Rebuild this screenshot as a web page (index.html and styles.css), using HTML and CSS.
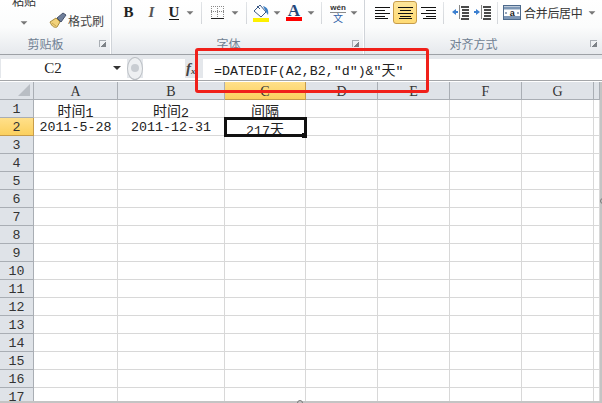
FILE: index.html
```html
<!DOCTYPE html>
<html lang="zh-CN">
<head>
    <meta charset="UTF-8">
    <title>DATEDIF</title>
    <link rel="stylesheet" href="styles.css">
</head>
<body>

    <div class="ribbon">
        <div class="group group-clip">
            <div class="tools">
                <div class="paste">
                    <span class="paste-text">粘贴</span>
                    <span class="arrow"></span>
                </div>
                <div class="brush">
                    <svg width="19" height="17" viewBox="0 0 19 17"><path d="M1 10l6-4 4 4-3 5c-2 1-5 0-7-5z" fill="#f2d27a" stroke="#a98c3e"/><path d="M3 11l4 3" stroke="#c7a54f"/><path d="M8 6l6-5 3 2-5 7z" fill="#6f7f9b" stroke="#46536c"/></svg>
                    <span>格式刷</span>
                </div>
            </div>
            <div class="label label-clip">剪贴板</div>
            <span class="launcher"></span>
        </div>

        <div class="group group-font">
            <div class="tools">
                <div class="tool w23"><b class="fmt fmt-b">B</b></div>
                <div class="tool w23"><i class="fmt fmt-i">I</i></div>
                <div class="tool w22"><span class="fmt fmt-u">U</span></div>
                <span class="drop w10"><span class="arrow"></span></span>
                <span class="sep w12"></span>
                <div class="tool w21">
                    <svg width="13" height="13" viewBox="0 0 13 13"><path d="M.5 0v11M6.500 0v11M12.500 0v11M0 .5h13M0 5.500h13" stroke="#8a8a8a" stroke-dasharray="1 1"/><path d="M0 12.500h13" stroke="#222"/></svg>
                </div>
                <span class="drop w14"><span class="arrow"></span></span>
                <span class="sep w8"></span>
                <div class="tool w22">
                    <svg width="17" height="18" viewBox="0 0 17 18"><path d="M1 7l6-6 6 7-5 5z" fill="#fff" stroke="#3c5a86"/><path d="M4 2l3 3" stroke="#3c5a86"/><path d="M10 2c4 1 6 4 5 9l-2-3z" fill="#3c7fc4"/><path d="M0 14h16v4H0z" fill="#fdf000"/></svg>
                </div>
                <span class="drop w10"><span class="arrow"></span></span>
                <div class="tool w24 font-color">
                    <span class="a-letter">A</span>
                    <span class="a-bar"></span>
                </div>
                <span class="drop w10"><span class="arrow"></span></span>
                <span class="sep w10"></span>
                <div class="tool w24 wen">
                    <span class="wen-top">wén</span>
                    <span class="wen-char">文</span>
                </div>
                <span class="drop w8"><span class="arrow"></span></span>
            </div>
            <div class="label label-font">字体</div>
            <span class="launcher"></span>
        </div>

        <div class="group group-align">
            <div class="tools">
                <div class="tool w22">
                    <svg width="15" height="12" viewBox="0 0 15 12"><path d="M0 .5h15M0 3.500h10M0 6.500h15M0 9.500h10M0 11.500h13" stroke="#111"/></svg>
                </div>
                <div class="tool w24 active">
                    <svg width="15" height="12" viewBox="0 0 15 12"><path d="M0 .5h15M2 3.500h11M0 6.500h15M2 9.500h11M1 11.500h13" stroke="#111"/></svg>
                </div>
                <div class="tool w22">
                    <svg width="15" height="12" viewBox="0 0 15 12"><path d="M0 .5h15M5 3.500h10M0 6.500h15M5 9.500h10M2 11.500h13" stroke="#111"/></svg>
                </div>
                <span class="sep w8"></span>
                <div class="tool w27">
                    <svg width="17" height="15" viewBox="0 0 17 15"><path d="M9 2h8M10 5h7M10 8h7M10 11h7M9 14h8" stroke="#111" stroke-width="1.300"/><path d="M7.500 .5v14" stroke="#111" stroke-dasharray="1 1"/><path d="M0 7l4-3v2h2v2H4v2z" fill="#3b7fd0"/></svg>
                </div>
                <div class="tool w17">
                    <svg width="17" height="15" viewBox="0 0 17 15"><path d="M9 2h8M10 5h7M10 8h7M10 11h7M9 14h8" stroke="#111" stroke-width="1.300"/><path d="M7.500 .5v14" stroke="#111" stroke-dasharray="1 1"/><path d="M6 7L2 4v2H0v2h2v2z" fill="#3b7fd0"/></svg>
                </div>
                <span class="sep w12"></span>
                <div class="merge">
                    <svg width="18" height="15" viewBox="0 0 18 15"><rect x=".5" y=".5" width="17" height="14" fill="#fff" stroke="#4d6a8c"/><path d="M1 3h16" stroke="#7d97b5" stroke-width="3"/><path d="M1 12.500h16" stroke="#7d97b5" stroke-width="3"/><path d="M2 8h2M14 8h2" stroke="#2c4c74"/><text x="9" y="11" font-size="9" font-weight="bold" font-family="Liberation Sans" text-anchor="middle" fill="#222">a</text></svg>
                    <span>合并后居中</span>
                    <span class="arrow"></span>
                </div>
            </div>
            <div class="label label-align">对齐方式</div>
            <span class="launcher"></span>
        </div>
    </div>

    <div class="formula-bar">
        <div class="name-box">
            <span class="name-text">C2</span>
            <span class="arrow dark"></span>
        </div>
        <div class="handle"><span class="handle-dot"></span></div>
        <div class="bar-gap"></div>
        <div class="fx">f<sub>x</sub></div>
        <div class="formula">=DATEDIF(A2,B2,″d″)&amp;″<span class="cjk">天</span>″</div>
    </div>

    <div class="sheet">
        <div class="grid">
            <div class="row head">
                <div class="corner"><span class="corner-mark"></span></div>
                <div class="col">A</div><div class="col">B</div><div class="col col-on">C</div><div class="col">D</div><div class="col">E</div><div class="col">F</div><div class="col">G</div><div class="col"></div>
            </div>
            <div class="row">
                <div class="num">1</div>
                <div class="cell"><span class="cjk">时间</span>1</div><div class="cell"><span class="cjk">时间</span>2</div><div class="cell"><span class="cjk">间隔</span></div><div class="cell"></div><div class="cell"></div><div class="cell"></div><div class="cell"></div><div class="cell"></div>
            </div>
            <div class="row">
                <div class="num num-on">2</div>
                <div class="cell">2011-5-28</div><div class="cell">2011-12-31</div><div class="cell cell-on">217<span class="cjk">天</span><span class="fill-handle"></span></div><div class="cell"></div><div class="cell"></div><div class="cell"></div><div class="cell"></div><div class="cell"></div>
            </div>
            <div class="row"><div class="num">3</div><div class="cell"></div><div class="cell"></div><div class="cell"></div><div class="cell"></div><div class="cell"></div><div class="cell"></div><div class="cell"></div><div class="cell"></div></div>
            <div class="row"><div class="num">4</div><div class="cell"></div><div class="cell"></div><div class="cell"></div><div class="cell"></div><div class="cell"></div><div class="cell"></div><div class="cell"></div><div class="cell"></div></div>
            <div class="row"><div class="num">5</div><div class="cell"></div><div class="cell"></div><div class="cell"></div><div class="cell"></div><div class="cell"></div><div class="cell"></div><div class="cell"></div><div class="cell"></div></div>
            <div class="row"><div class="num">6</div><div class="cell"></div><div class="cell"></div><div class="cell"></div><div class="cell"></div><div class="cell"></div><div class="cell"></div><div class="cell"></div><div class="cell"></div></div>
            <div class="row"><div class="num">7</div><div class="cell"></div><div class="cell"></div><div class="cell"></div><div class="cell"></div><div class="cell"></div><div class="cell"></div><div class="cell"></div><div class="cell"></div></div>
            <div class="row"><div class="num">8</div><div class="cell"></div><div class="cell"></div><div class="cell"></div><div class="cell"></div><div class="cell"></div><div class="cell"></div><div class="cell"></div><div class="cell"></div></div>
            <div class="row"><div class="num">9</div><div class="cell"></div><div class="cell"></div><div class="cell"></div><div class="cell"></div><div class="cell"></div><div class="cell"></div><div class="cell"></div><div class="cell"></div></div>
            <div class="row"><div class="num">10</div><div class="cell"></div><div class="cell"></div><div class="cell"></div><div class="cell"></div><div class="cell"></div><div class="cell"></div><div class="cell"></div><div class="cell"></div></div>
            <div class="row"><div class="num">11</div><div class="cell"></div><div class="cell"></div><div class="cell"></div><div class="cell"></div><div class="cell"></div><div class="cell"></div><div class="cell"></div><div class="cell"></div></div>
            <div class="row"><div class="num">12</div><div class="cell"></div><div class="cell"></div><div class="cell"></div><div class="cell"></div><div class="cell"></div><div class="cell"></div><div class="cell"></div><div class="cell"></div></div>
            <div class="row"><div class="num">13</div><div class="cell"></div><div class="cell"></div><div class="cell"></div><div class="cell"></div><div class="cell"></div><div class="cell"></div><div class="cell"></div><div class="cell"></div></div>
            <div class="row"><div class="num">14</div><div class="cell"></div><div class="cell"></div><div class="cell"></div><div class="cell"></div><div class="cell"></div><div class="cell"></div><div class="cell"></div><div class="cell"></div></div>
            <div class="row"><div class="num">15</div><div class="cell"></div><div class="cell"></div><div class="cell"></div><div class="cell"></div><div class="cell"></div><div class="cell"></div><div class="cell"></div><div class="cell"></div></div>
            <div class="row"><div class="num">16</div><div class="cell"></div><div class="cell"></div><div class="cell"></div><div class="cell"></div><div class="cell"></div><div class="cell"></div><div class="cell"></div><div class="cell"></div></div>
            <div class="row"><div class="num">17</div><div class="cell"></div><div class="cell"></div><div class="cell"></div><div class="cell"></div><div class="cell"></div><div class="cell"></div><div class="cell"></div><div class="cell"></div></div>
        </div>
        <div class="scroll-edge"></div>
    </div>
    <div class="bottom-edge"></div>

    <!-- small marks on the window edges -->
    <span class="edge-mark edge-right"></span>
    <span class="edge-mark edge-bottom"></span>

    <!-- red annotation around the formula -->
    <div class="callout"></div>

</body>
</html>
```

FILE: styles.css
```css
html, body {
    margin: 0;
    padding: 0;
}
body {
    width: 602px;
    height: 403px;
    overflow: hidden;
    background-color: #fff;
    font-family: "Liberation Mono", "Noto Sans CJK SC", monospace;
    color: #222;
    position: relative;
}

/* ribbon */
.ribbon {
    display: flex;
    height: 54px;
    background: linear-gradient(#fff, #fbfcfc 50%, #e6e9ed);
    border-bottom: 1px solid #9da1a6;
    font-family: "Noto Sans CJK SC", sans-serif;
    overflow: hidden;
}
.group {
    position: relative;
    display: flex;
    flex-direction: column;
    box-sizing: border-box;
    border-right: 1px solid #d0d4d9;
    box-shadow: inset -1px 0 0 #fff;
}
.group-clip { width: 112px; }
.group-font { width: 253px; padding-left: 5px; }
.group-align { flex: 1; padding-left: 6px; border-right: none; box-shadow: none; }
.tools {
    display: flex;
    align-items: center;
    height: 23px;
    margin-top: 1px;
}
.label {
    margin-top: 12px;
    text-align: center;
    font-size: 12px;
    line-height: 16px;
    color: #6f7f92;
}
.label-clip { padding-right: 20px; }
.label-font { padding-right: 24px; }
.label-align { padding-right: 26px; }
.launcher {
    position: absolute;
    right: 5px;
    bottom: 7px;
    width: 6px;
    height: 6px;
    border-left: 1px solid #a9aeb4;
    border-top: 1px solid #a9aeb4;
    background: linear-gradient(135deg, transparent 55%, #7d8287 55%);
}

.arrow {
    display: block;
    width: 0;
    height: 0;
    border-left: 4px solid transparent;
    border-right: 4px solid transparent;
    border-top: 4px solid #777;
    transform: scale(.85);
}
.arrow.dark { border-top-color: #333; transform: none; }

.paste {
    display: flex;
    flex-direction: column;
    align-items: center;
    width: 48px;
    margin-top: -7px;
    font-size: 12px;
    line-height: 16px;
    color: #333;
}
.paste .arrow { margin-top: 12px; }
.brush {
    display: flex;
    align-items: center;
    margin-left: 1px;
    margin-top: 15px;
    font-size: 12px;
    color: #444;
}

.tool {
    display: flex;
    align-items: center;
    justify-content: center;
    height: 23px;
    flex: none;
    box-sizing: border-box;
}
.drop {
    display: flex;
    align-items: center;
    justify-content: center;
    flex: none;
    height: 23px;
}
.sep {
    display: block;
    flex: none;
    height: 22px;
    background: linear-gradient(#e2e5e8, #d3d6da) center / 1px 100% no-repeat;
}
.w8 { width: 8px; }
.w10 { width: 10px; }
.w12 { width: 12px; }
.w14 { width: 14px; }
.w17 { width: 17px; }
.w21 { width: 21px; }
.w22 { width: 22px; }
.w23 { width: 23px; }
.w24 { width: 24px; }
.w27 { width: 27px; }

.fmt {
    font-family: "Liberation Serif", serif;
    font-size: 15px;
    line-height: 15px;
    color: #222;
}
.fmt-b { font-weight: bold; }
.fmt-i { font-weight: bold; color: #555; }
.fmt-u { font-weight: bold; border-bottom: 1px solid #111; line-height: 14px; }

.font-color {
    flex-direction: column;
    justify-content: flex-start;
    padding-top: 3px;
}
.a-letter {
    font-family: "Liberation Serif", serif;
    font-weight: bold;
    font-size: 17px;
    line-height: 13px;
    color: #24477c;
}
.a-bar {
    width: 16px;
    height: 4px;
    background-color: #f00;
}
.wen {
    flex-direction: column;
    justify-content: flex-start;
    padding-top: 2px;
}
.wen-top {
    font-family: "Liberation Sans", sans-serif;
    font-size: 8px;
    font-weight: bold;
    line-height: 9px;
    color: #333;
    border-bottom: 1px solid #8a8a8a;
}
.wen-char {
    font-size: 10px;
    line-height: 10px;
    color: #2f5fa8;
}

.active {
    background: linear-gradient(#fde59a, #ffdb75);
    border: 1px solid #c79c4a;
    border-radius: 3px;
}
.merge {
    display: flex;
    align-items: center;
    font-size: 12px;
    color: #333;
    letter-spacing: -.3px;
}
.merge span:nth-child(2) { margin-left: 3px; }
.merge .arrow { margin-left: 5px; }

/* formula bar */
.formula-bar {
    display: flex;
    align-items: center;
    height: 26px;
    background-color: #e4e7eb;
    border-bottom: 1px solid #a4a6a9;
    padding: 4px 0 3px 1px;
    box-sizing: border-box;
    box-shadow: inset 0 -2px 0 #fff;
}
.name-box {
    display: flex;
    align-items: center;
    width: 126px;
    height: 19px;
    background-color: #fff;
    font-family: "Liberation Serif", serif;
    font-size: 15px;
}
.name-text {
    width: 104px;
    text-align: center;
}
.name-box .arrow { margin-left: 8px; }
.handle {
    display: flex;
    align-items: center;
    justify-content: center;
    flex: none;
    width: 16px;
    height: 23px;
    border-radius: 50%;
    border: 1px solid #bcc0c5;
    background-color: #eef0f2;
    box-sizing: border-box;
}
.handle-dot {
    width: 8px;
    height: 8px;
    border-radius: 50%;
    background-color: #c9cdd2;
}
.bar-gap {
    width: 42px;
    height: 19px;
    background-color: #fff;
}
.fx {
    width: 18px;
    padding-left: 1px;
    box-sizing: border-box;
    font-family: "Liberation Serif", serif;
    font-style: italic;
    font-weight: bold;
    font-size: 15px;
    color: #444;
    white-space: nowrap;
}
.fx sub { font-size: 9px; vertical-align: -1px; }
.formula {
    flex: 1;
    height: 19px;
    padding-left: 11px;
    background-color: #fff;
    font-size: 13.3px;
    line-height: 20px;
    white-space: nowrap;
}
.cjk { font-family: "Noto Sans CJK SC", sans-serif; font-size: 14px; }
.cell .cjk { vertical-align: 1px; }

/* sheet */
.sheet {
    display: flex;
    height: 319px;
    margin-top: 1px;
    overflow: hidden;
}
.grid { width: 600px; }
.row {
    display: grid;
    grid-template-columns: 34px 84px 107px 81px 72px 72px 72px 72px 6px;
    grid-template-rows: 18px;
    height: 18px;
}
.corner, .col, .num {
    background-color: #dfe3e8;
    box-sizing: border-box;
    border-right: 1px solid #a9aeb4;
    border-bottom: 1px solid #a9aeb4;
    text-align: center;
    font-size: 13.3px;
    line-height: 20px;
    color: #333;
}
.col {
    font-family: "Liberation Serif", serif;
    font-size: 14px;
    line-height: 19px;
}
.corner {
    display: flex;
    align-items: flex-end;
    justify-content: flex-end;
    padding: 0 3px 3px 0;
}
.corner-mark {
    width: 0;
    height: 0;
    border-left: 12px solid transparent;
    border-bottom: 12px solid #b9bec4;
}
.col-on, .num-on {
    background: linear-gradient(#ffe08a, #fbd05e);
    border-color: #c79c4a;
}
.cell {
    position: relative;
    box-sizing: border-box;
    border-right: 1px solid #d8d8d8;
    border-bottom: 1px solid #d8d8d8;
    text-align: center;
    font-size: 13.3px;
    line-height: 20px;
    white-space: nowrap;
}
.cell-on {
    outline: 3px solid #111;
    outline-offset: -2px;
    z-index: 1;
}
.fill-handle {
    position: absolute;
    right: -2px;
    bottom: -3px;
    width: 5px;
    height: 5px;
    background-color: #111;
}
.scroll-edge {
    flex: 1;
    background-color: #c4c4c4;
}
.bottom-edge {
    height: 2px;
    background-color: #c4c4c4;
}
.edge-mark {
    position: absolute;
    width: 6px;
    height: 6px;
    box-sizing: border-box;
    border: 1px solid #777;
    border-radius: 50%;
}
.edge-right { left: 600px; top: 198px; }
.edge-bottom { left: 297px; top: 400px; }

.callout {
    position: absolute;
    left: 195px;
    top: 48px;
    width: 234px;
    height: 45px;
    box-sizing: border-box;
    border: 3px solid #f0201a;
    border-radius: 3px;
}
```
